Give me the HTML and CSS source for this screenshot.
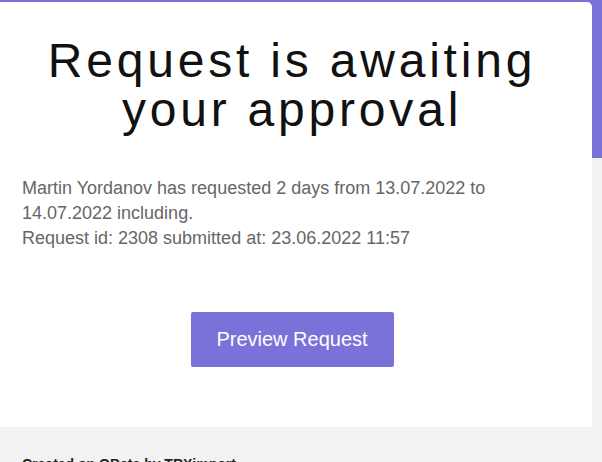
FILE: index.html
```html
<!DOCTYPE html>
<html>
<head>
<meta charset="utf-8">
<link rel="stylesheet" href="styles.css">
</head>
<body>
<div class="page">
  <div class="card">
    <h1 class="title">Request is awaiting your approval</h1>
    <p class="text">Martin Yordanov has requested 2 days from 13.07.2022 to 14.07.2022 including.<br>Request id: 2308 submitted at: 23.06.2022 11:57</p>
    <div class="actions"><a class="button" href="#">Preview Request</a></div>
  </div>
  <div class="footer">Created on QBeta by TRXimport</div>
</div>
</body>
</html>
```
FILE: styles.css
```css
html, body {
  margin: 0;
  padding: 0;
}
body {
  background: #f2f2f2;
  font-family: "Liberation Sans", Arial, sans-serif;
}
.page {
  background: linear-gradient(#7b72d9 0, #7b72d9 158px, #f2f2f2 158px);
  padding-top: 2px;
  min-height: 460px;
}
.card {
  width: 540px;
  background: #fff;
  border-top-right-radius: 5px;
  padding: 34px 30px 60px 22px;
}
.title {
  margin: 0;
  font-weight: normal;
  font-size: 48px;
  line-height: 49px;
  letter-spacing: 3.8px;
  text-align: center;
  color: #111;
}
.text {
  margin: 42px 0 0;
  font-size: 18px;
  line-height: 25px;
  color: #666;
}
.actions {
  margin-top: 61px;
  display: flex;
  justify-content: center;
}
.button {
  display: flex;
  align-items: center;
  justify-content: center;
  width: 203px;
  height: 55px;
  background: #7b72d9;
  color: #fff;
  font-size: 20px;
  text-decoration: none;
  border-radius: 2px;
}
.footer {
  padding: 29px 22px 0;
  font-size: 14px;
  font-weight: bold;
  color: #222;
}
```
